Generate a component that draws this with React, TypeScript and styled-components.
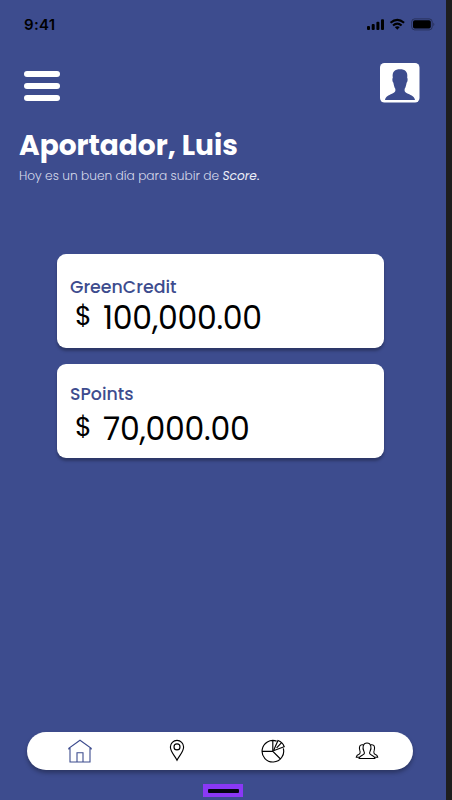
import React from "react";
import styled, { createGlobalStyle } from "styled-components";

const Global = createGlobalStyle`
  * { box-sizing: border-box; }
  body { margin: 0; background: #1e1e1e; font-family: Poppins, Inter, "Liberation Sans", sans-serif; }
`;
const Frame = styled.main`
  width: 452px; height: 800px; background: #3d4c8e;
  border-right: 6px solid #1e1e1e; display: flex; flex-direction: column;
  overflow: hidden;
`;
const StatusBar = styled.div`
  height: 48px; padding: 1px 10px 0 24px; display: flex; align-items: center; justify-content: space-between;
`;
const Time = styled.span`
  font-family: Inter, sans-serif; font-size: 15px; font-weight: 600; letter-spacing: 0.3px; line-height: 20px; color: #000;
`;
const Header = styled.header`
  height: 72px; padding: 15px 26.5px 0 24px; display: flex; justify-content: space-between; align-items: flex-start;
`;
const MenuButton = styled.button`
  border: 0; background: none; padding: 0; margin-top: 8px; width: 36px;
  display: flex; flex-direction: column; gap: 6px;
`;
const MenuBar = styled.span`height: 6px; border-radius: 3px; background: #fff;`;
const Greeting = styled.section`padding: 6px 19px 0; height: 134px; color: #fff;`;
const Name = styled.h1`
  margin: 0; font-size: 28px; line-height: 40px; font-weight: 700; white-space: nowrap;
`;
const Hint = styled.p`
  margin: 0; font-size: 12.2px; line-height: 20px; font-weight: 300; color: #d5d9ea; white-space: nowrap;
`;
const Score = styled.em`font-weight: 400; color: #eceef7;`;
const Stop = styled.b`color: #fff;`;
const Cards = styled.section`padding: 0 62px 0 57px; display: flex; flex-direction: column; gap: 15.6px;`;
const Card = styled.article<{ $top: number }>`
  height: 94px; border-radius: 9px; background: #fff; padding: ${(p) => p.$top}px 13px 0;
  box-shadow: 0 3px 3px rgba(0, 0, 0, 0.28);
`;
const Label = styled.h2`
  margin: 0; color: #3d4c8e; font-size: 17.4px; line-height: 24px; font-weight: 500; white-space: nowrap;
`;
const Amount = styled.div<{ $gap: number }>`
  margin-top: ${(p) => p.$gap}px; display: flex; align-items: center; padding-left: 5px; color: #000; height: 38px;
`;
const Currency = styled.span`width: 28px; font-size: 27px; line-height: 34px; margin-top: -3px;`;
const Value = styled.span`
  font-size: 31.5px; line-height: 38px; letter-spacing: -0.25px; white-space: nowrap;
`;
const Tabs = styled.nav`
  margin: auto 33px 0 27px; height: 38px; border-radius: 19px; background: #fff; flex: none;
  box-shadow: 0 3px 4px rgba(0, 0, 0, 0.3);
  display: grid; grid-template-columns: 106px 87px 105px 84px; align-items: center; justify-items: center;
`;
const Tab = styled.button`border: 0; background: none; padding: 0; display: flex;`;
const HomeIndicator = styled.div`
  width: 40px; height: 13px; margin: 14px 0 3px 203px; flex: none; background: #8a38f5; display: grid; place-items: center;
`;
const Pill = styled.span`width: 31px; height: 4px; border-radius: 1px; background: #050512;`;

const StatusIcons = () => (
  <svg width="70" height="14" viewBox="0 0 70 14">
    <rect x="1" y="8" width="3" height="4" rx="1" />
    <rect x="5.7" y="6" width="3" height="6" rx="1" />
    <rect x="10.4" y="3.7" width="3" height="8.3" rx="1" />
    <rect x="15" y="1.2" width="3" height="10.8" rx="1" />
    <g fill="none" stroke="#000" strokeWidth="2.1">
      <path d="M24.5 4.8Q31.3-1 38.1 4.8" />
      <path d="M27 7.5Q31.3 3.7 35.6 7.5" />
    </g>
    <path d="M28.8 9.1Q31.3 7.2 33.8 9.1L31.3 11.7Z" />
    <rect x="45.7" y=".9" width="20.5" height="11" rx="3" fill="none" stroke="#000" strokeOpacity=".35" />
    <rect x="47" y="2.3" width="17.8" height="8.2" rx="1.8" />
    <path d="M67.3 4.5Q69.5 6.3 67.3 8.3Z" opacity=".35" />
  </svg>
);
const Avatar = () => (
  <svg width="40" height="40" viewBox="0 0 40 40">
    <rect width="39.5" height="39.5" rx="4.5" fill="#fff" />
    <path fill="#3d4c8e" d="M5 37C5.3 34 8.5 32.3 12 30.8C15 29.5 15.7 28.5 15.3 25.8C14.2 24 13.7 21.5 13.4 19.7C12.3 18.7 12 15.5 12.8 14.7C11.9 8.5 15 6.2 20 6.2C25 6.2 28.1 8.6 27.2 14.7C28 15.5 27.7 18.7 26.6 19.7C26.3 21.5 25.8 24 24.7 25.8C24.3 28.5 25 29.5 28 30.8C31.5 32.3 34.7 34 35 37Z" />
  </svg>
);
const HomeIcon = () => (
  <svg width="26" height="26" viewBox="0 0 26 26" fill="none" stroke="#3d4c8e" strokeWidth="1.1">
    <path d="M1.8 11.4V10.2L13 2.2L24.2 10.2V11.4M3 10V24H23V10M10 24V14.7H16V24" />
  </svg>
);
const PinIcon = () => (
  <svg width="16" height="24" viewBox="0 0 16 24" fill="none" stroke="#000" strokeWidth="1.15">
    <path d="M8 21.2C6 17 1.4 12.9 1.4 8A6.6 6.6 0 0 1 14.6 8C14.6 12.9 10 17 8 21.2Z" />
    <circle cx="8" cy="7.9" r="3" />
  </svg>
);
const PieIcon = () => (
  <svg width="24" height="24" viewBox="0 0 24 24" fill="none" stroke="#000" strokeWidth="1.15">
    <path d="M15.6 2.1A10.8 10.8 0 1 0 22.3 9.4M11.8 1.6V12.4M1 12.4H11.8L19.5 20" />
    <path d="M12.4 11.7L17 1.5Q21.6 3 23.2 7.7L12.4 11.7M15.6 8.9L20.6 3.7" />
  </svg>
);
const PeopleIcon = () => (
  <svg width="24" height="20" viewBox="0 0 24 20" fill="none" stroke="#000" strokeWidth="1.05" strokeLinejoin="round">
    <path d="M4 17.5H20C19.7 15.4 18.2 14.8 16.2 13.9C14.4 13 14.2 12 15.1 10.2C16.8 6.8 16.2 2 12 2S7.2 6.8 8.9 10.2C9.8 12 9.6 13 7.8 13.9C5.8 14.8 4.3 15.4 4 17.5Z" />
    <path d="M8.2 3.8C4.7 3 3.8 6 4.8 9.4C6 12.5 4.5 13.2 2.2 14.2L1.2 16.2H4.2M15.8 3.8C19.3 3 20.2 6 19.2 9.4C18 12.5 19.5 13.2 21.8 14.2L22.8 16.2H19.8" />
  </svg>
);

export default function App() {
  return (
    <>
      <Global />
      <Frame>
        <StatusBar><Time>9:41</Time><StatusIcons /></StatusBar>
        <Header>
          <MenuButton aria-label="Menú"><MenuBar /><MenuBar /><MenuBar /></MenuButton>
          <Avatar />
        </Header>
        <Greeting>
          <Name>Aportador, Luis</Name>
          <Hint>Hoy es un buen día para subir de <Score>Score</Score><Stop>.</Stop></Hint>
        </Greeting>
        <Cards>
          <Card $top={21}>
            <Label>GreenCredit</Label>
            <Amount $gap={-0.5}><Currency>$</Currency><Value>100,000.00</Value></Amount>
          </Card>
          <Card $top={18}>
            <Label>SPoints</Label>
            <Amount $gap={4}><Currency>$</Currency><Value>70,000.00</Value></Amount>
          </Card>
        </Cards>
        <Tabs>
          <Tab aria-label="Inicio"><HomeIcon /></Tab>
          <Tab aria-label="Ubicación"><PinIcon /></Tab>
          <Tab aria-label="Estadísticas"><PieIcon /></Tab>
          <Tab aria-label="Comunidad"><PeopleIcon /></Tab>
        </Tabs>
        <HomeIndicator><Pill /></HomeIndicator>
      </Frame>
    </>
  );
}
